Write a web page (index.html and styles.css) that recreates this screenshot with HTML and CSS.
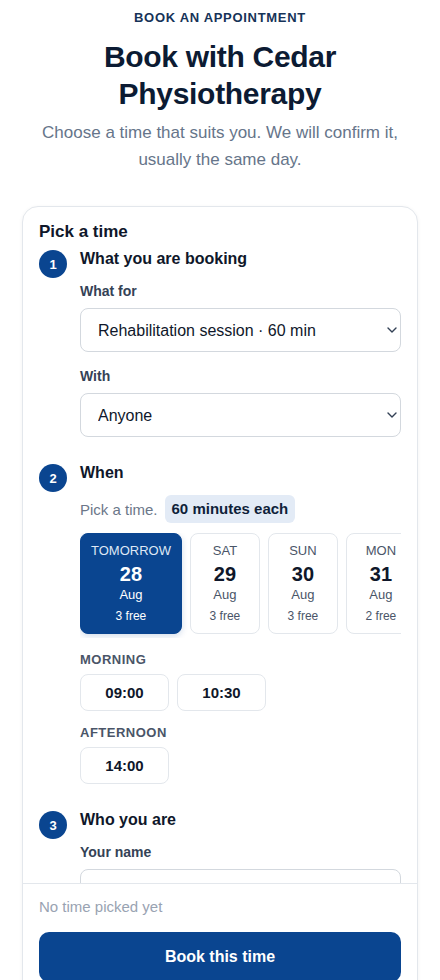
FILE: index.html
```html
<!DOCTYPE html>
<html lang="en">
<head>
<meta charset="utf-8">
<meta name="viewport" content="width=device-width, initial-scale=1">
<title>Book with Cedar Physiotherapy</title>
<link rel="stylesheet" href="styles.css">
</head>
<body>
<main class="page">
  <header class="intro">
    <p class="eyebrow">BOOK AN APPOINTMENT</p>
    <h1 class="title">Book with Cedar Physiotherapy</h1>
    <p class="lead">Choose a time that suits you. We will confirm it, usually the same day.</p>
  </header>

  <section class="card">
    <div class="card-body">
      <h2 class="card-title">Pick a time</h2>

      <div class="step">
        <div class="step-num">1</div>
        <div class="step-body">
          <h3 class="step-title">What you are booking</h3>
          <div class="field">
            <label class="label" for="svc">What for</label>
            <div class="select-wrap">
              <select class="select" id="svc">
                <option>Rehabilitation session · 60 min</option>
              </select>
              <svg class="chev" width="10" height="6" viewBox="0 0 10 6" aria-hidden="true"><path d="M1 1l4 4 4-4" fill="none" stroke="#334155" stroke-width="1.4" stroke-linecap="round" stroke-linejoin="round"/></svg>
            </div>
          </div>
          <div class="field">
            <label class="label" for="with">With</label>
            <div class="select-wrap">
              <select class="select" id="with">
                <option>Anyone</option>
              </select>
              <svg class="chev" width="10" height="6" viewBox="0 0 10 6" aria-hidden="true"><path d="M1 1l4 4 4-4" fill="none" stroke="#334155" stroke-width="1.4" stroke-linecap="round" stroke-linejoin="round"/></svg>
            </div>
          </div>
        </div>
      </div>

      <div class="step">
        <div class="step-num">2</div>
        <div class="step-body">
          <h3 class="step-title">When</h3>
          <div class="meta">
            <span class="meta-text">Pick a time.</span>
            <span class="badge">60 minutes each</span>
          </div>
          <div class="days">
            <button class="day is-selected" type="button">
              <span class="day-name">TOMORROW</span>
              <span class="day-num">28</span>
              <span class="day-month">Aug</span>
              <span class="day-free">3 free</span>
            </button>
            <button class="day" type="button">
              <span class="day-name">SAT</span>
              <span class="day-num">29</span>
              <span class="day-month">Aug</span>
              <span class="day-free">3 free</span>
            </button>
            <button class="day" type="button">
              <span class="day-name">SUN</span>
              <span class="day-num">30</span>
              <span class="day-month">Aug</span>
              <span class="day-free">3 free</span>
            </button>
            <button class="day" type="button">
              <span class="day-name">MON</span>
              <span class="day-num">31</span>
              <span class="day-month">Aug</span>
              <span class="day-free">2 free</span>
            </button>
          </div>
          <p class="period">MORNING</p>
          <div class="slots">
            <button class="slot" type="button">09:00</button>
            <button class="slot" type="button">10:30</button>
          </div>
          <p class="period period-next">AFTERNOON</p>
          <div class="slots">
            <button class="slot" type="button">14:00</button>
          </div>
        </div>
      </div>

      <div class="step">
        <div class="step-num">3</div>
        <div class="step-body">
          <h3 class="step-title">Who you are</h3>
          <div class="field">
            <label class="label" for="name">Your name</label>
            <input class="input" id="name" type="text">
          </div>
          <div class="field">
            <label class="label" for="phone">Phone</label>
            <input class="input" id="phone" type="tel">
          </div>
        </div>
      </div>
    </div>

    <div class="card-foot">
      <p class="foot-note">No time picked yet</p>
      <button class="primary" type="button">Book this time</button>
    </div>
  </section>
</main>
</body>
</html>
```

FILE: styles.css
```css
* { box-sizing: border-box; }

html, body {
  margin: 0;
  padding: 0;
  background: #ffffff;
}

body {
  font-family: "Liberation Sans", Arial, sans-serif;
  color: #0f172a;
}

.page {
  height: 100vh;
  overflow: hidden;
  display: flex;
  flex-direction: column;
  padding: 9px 22px 0;
}

.intro {
  flex: none;
  text-align: center;
}

.eyebrow {
  margin: 0 0 12px;
  font-size: 13px;
  line-height: 17px;
  font-weight: 700;
  letter-spacing: 0.7px;
  color: #163358;
}

.title {
  margin: 0 0 7px;
  font-size: 30px;
  line-height: 37px;
  font-weight: 700;
  letter-spacing: -0.3px;
  color: #0c1b33;
}

.lead {
  margin: 0 0 33px;
  font-size: 17px;
  line-height: 27px;
  color: #66758a;
}

.card {
  flex: 1 0 auto;
  min-height: 0;
  margin-bottom: -21px;
  display: flex;
  flex-direction: column;
  border: 1px solid #e3e7ec;
  border-radius: 16px;
  background: #fff;
  box-shadow: 0 1px 4px rgba(15, 23, 42, 0.05);
}

.card-body {
  flex: 1 1 0;
  min-height: 0;
  overflow: hidden;
  padding: 15px 16px 24px;
}

.card-title {
  margin: 0 0 7px;
  font-size: 17px;
  line-height: 20px;
  font-weight: 700;
  color: #0f172a;
}

.step {
  display: grid;
  grid-template-columns: 28px 1fr;
  column-gap: 13px;
}

.step + .step {
  margin-top: 26px;
}

.step-num {
  width: 28px;
  height: 28px;
  margin-top: 1px;
  border-radius: 50%;
  background: #0a4590;
  color: #fff;
  font-size: 13px;
  font-weight: 700;
  display: flex;
  align-items: center;
  justify-content: center;
}

.step-body {
  min-width: 0;
}

.step-title {
  margin: 0 0 14px;
  font-size: 16px;
  line-height: 20px;
  font-weight: 700;
  color: #0f172a;
}

.field + .field {
  margin-top: 16px;
}

.label {
  display: block;
  margin-bottom: 8px;
  font-size: 14px;
  line-height: 17px;
  font-weight: 700;
  color: #344256;
}

.select-wrap {
  position: relative;
}

.select,
.input {
  display: block;
  width: 100%;
  height: 44px;
  padding: 0 17px;
  border: 1px solid #d3d8de;
  border-radius: 8px;
  background: #fff;
  font-family: inherit;
  font-size: 16px;
  color: #0f172a;
}

.select {
  appearance: none;
  -webkit-appearance: none;
  padding-right: 30px;
}

.chev {
  position: absolute;
  right: 4px;
  top: 19px;
  pointer-events: none;
}

.meta {
  display: flex;
  align-items: center;
  gap: 7px;
  height: 28px;
  margin-top: -2px;
  margin-bottom: 10px;
}

.meta-text {
  font-size: 15px;
  color: #6b7789;
}

.badge {
  display: inline-block;
  height: 28px;
  line-height: 28px;
  padding: 0 7px;
  border-radius: 6px;
  background: #e3ebf6;
  font-size: 15px;
  font-weight: 700;
  color: #0f1f3a;
}

.days {
  display: flex;
  gap: 8px;
  overflow-x: auto;
  padding-bottom: 4px;
  margin-bottom: 14px;
  scrollbar-width: none;
}

.days::-webkit-scrollbar { display: none; }

.day {
  flex: 0 0 auto;
  min-width: 70px;
  padding: 9px 10px;
  border: 1px solid #e3e7ec;
  border-radius: 8px;
  background: #fff;
  font-family: inherit;
  color: #0f172a;
  display: flex;
  flex-direction: column;
  align-items: center;
  text-align: center;
}

.day-name {
  font-size: 13px;
  line-height: 16px;
  margin-bottom: 3px;
  color: #4a5568;
}

.day-num {
  font-size: 20px;
  line-height: 24px;
  font-weight: 700;
  color: #0f172a;
}

.day-month {
  font-size: 13px;
  line-height: 18px;
  color: #4a5568;
}

.day-free {
  margin-top: 4px;
  font-size: 12px;
  line-height: 16px;
  color: #4a5568;
}

.day.is-selected {
  background: #0a4590;
  border-color: #0a4590;
  box-shadow: 0 2px 6px rgba(10, 69, 144, 0.18);
}

.day.is-selected .day-name { color: #dfe8f5; }
.day.is-selected .day-num,
.day.is-selected .day-month,
.day.is-selected .day-free { color: #ffffff; }

.period {
  margin: 0 0 6px;
  font-size: 13px;
  line-height: 16px;
  font-weight: 700;
  letter-spacing: 0.5px;
  color: #4a5568;
}

.period-next {
  margin-top: 14px;
}

.slots {
  display: flex;
  gap: 8px;
}

.slot {
  width: 89px;
  height: 37px;
  border: 1px solid #e3e7ec;
  border-radius: 8px;
  background: #fff;
  font-family: inherit;
  font-size: 15px;
  font-weight: 700;
  color: #0f172a;
}

.card-foot {
  flex: none;
  background: #fff;
  border-top: 1px solid #e3e7ec;
  padding: 13px 16px 18px;
  border-radius: 0 0 16px 16px;
}

.foot-note {
  margin: 0 0 15px;
  font-size: 15px;
  line-height: 20px;
  color: #99a3b2;
}

.primary {
  display: block;
  width: 100%;
  height: 50px;
  border: 0;
  border-radius: 10px;
  background: #0a4590;
  color: #fff;
  font-family: inherit;
  font-size: 16px;
  font-weight: 700;
}
```
